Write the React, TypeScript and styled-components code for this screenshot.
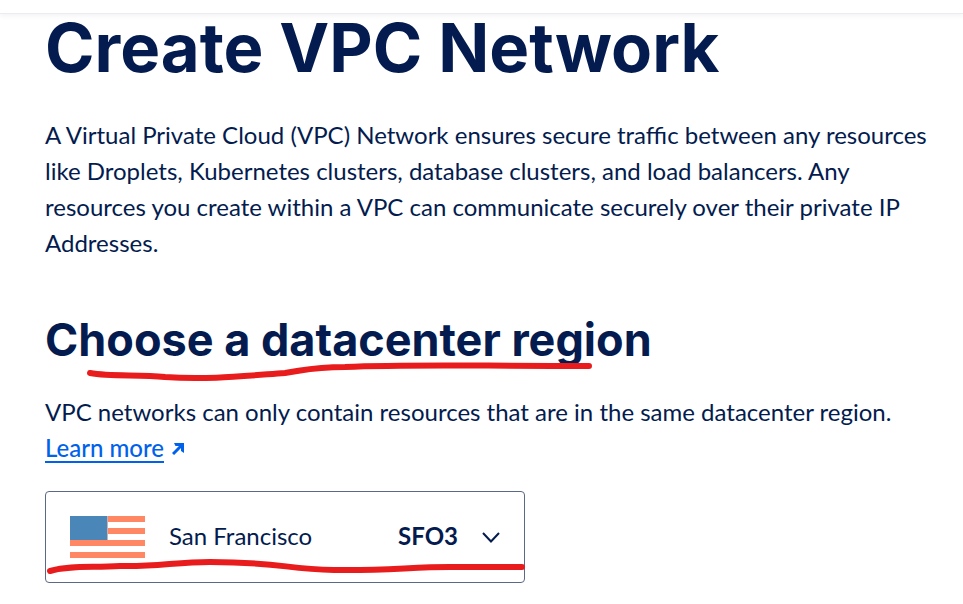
import React from "react";
import styled, { createGlobalStyle } from "styled-components";

const navy = "#031b4e";
const blue = "#0061eb";
const red = "#e81c1c";

const GlobalStyle = createGlobalStyle`
  *, *::before, *::after { box-sizing: border-box; }
  body {
    margin: 0;
    background: #fff;
    color: ${navy};
    font-family: Lato, "Open Sans", sans-serif;
    font-size: 24px;
    line-height: 36px;
  }
`;

const TopBar = styled.header`
  height: 14px;
  background: #fff;
  border-bottom: 1px solid #ececee;
  box-shadow: 0 2px 5px rgba(3, 27, 78, 0.05);
`;

const Content = styled.main`
  padding: 0 32px 20px 45px;
`;

const Title = styled.h1`
  margin: 0;
  font-family: Inter, Lato, sans-serif;
  font-size: 67px;
  line-height: 68px;
  font-weight: 700;
`;

const Text = styled.p`
  margin: 0;
`;

const Intro = styled(Text)`
  margin-top: 35px;
`;

const Section = styled.section`
  margin-top: 49px;
`;

const SectionTitle = styled.h2`
  position: relative;
  width: fit-content;
  margin: 0 0 24px;
  font-family: Inter, Lato, sans-serif;
  font-size: 45px;
  line-height: 60px;
  font-weight: 700;
`;

const LearnMore = styled.a`
  display: inline-flex;
  align-items: center;
  gap: 8px;
  color: ${blue};
  font-weight: 500;
  text-decoration: none;
`;

const LinkLabel = styled.span`
  line-height: 26px;
  border-bottom: 2px solid ${blue};
`;

const RegionPicker = styled.button`
  position: relative;
  display: flex;
  align-items: center;
  width: 100%;
  max-width: 480px;
  height: 92px;
  margin-top: 25px;
  padding: 0 24px;
  border: 1px solid #5b6987;
  border-radius: 4px;
  background: #fff;
  color: ${navy};
  font: inherit;
  text-align: left;
  cursor: pointer;
`;

const City = styled.span`
  flex: 1;
  margin-left: 24px;
  padding-bottom: 2px;
`;

const Code = styled.span`
  margin-right: 24px;
  padding-bottom: 2px;
  font-weight: 700;
`;

const Stroke = styled.svg<{ $left: number; $top: number }>`
  position: absolute;
  left: ${(p) => p.$left}px;
  top: ${(p) => p.$top}px;
  overflow: visible;
  pointer-events: none;
  fill: none;
  stroke: ${red};
  stroke-width: 6;
  stroke-linecap: round;
  stroke-linejoin: round;
`;

function Flag() {
  return (
    <svg width="75" height="42" viewBox="0 0 75 42" shapeRendering="crispEdges" aria-hidden="true">
      <path fill="#ff8764" d="M0 0h75v6H0zM0 12h75v6H0zM0 24h75v6H0zM0 36h75v6H0z" />
      <path fill="#c3b3b4" d="M37 0h1v24h-1z" />
      <path fill="#4a86b8" d="M0 0h37v24H0z" />
    </svg>
  );
}

function ExternalArrow() {
  return (
    <svg width="13" height="12" viewBox="0 0 13 12" aria-hidden="true">
      <path d="M1 11L10 2" stroke={blue} strokeWidth="3" fill="none" />
      <path d="M2 0H12V10L9 8V3H3.5Z" fill={blue} />
    </svg>
  );
}

function Chevron() {
  return (
    <svg width="18" height="11" viewBox="0 0 18 11" fill="none" aria-hidden="true">
      <path d="M1 1L9 9.500L17 1" stroke={navy} strokeWidth="2" />
    </svg>
  );
}

export default function App() {
  return (
    <>
      <GlobalStyle />
      <TopBar />
      <Content>
        <Title>Create VPC Network</Title>
        <Intro>
          A Virtual Private Cloud (VPC) Network ensures secure traffic between any resources like
          Droplets, Kubernetes clusters, database clusters, and load balancers. Any resources you
          create within a VPC can communicate securely over their private IP Addresses.
        </Intro>
        <Section>
          <SectionTitle id="region-title">
            Choose a datacenter region
            <Stroke $left={45} $top={56} width="500" height="14" viewBox="0 0 500 14" aria-hidden="true">
              <path d="M0 7C22 11 49 8 75 11C116 14 154 10 195 7C216 4 223 1 255 1C322 -2 376 0 499 0" />
            </Stroke>
          </SectionTitle>
          <Text>
            VPC networks can only contain resources that are in the same datacenter region.{" "}
            <LearnMore href="#learn-more">
              <LinkLabel>Learn more</LinkLabel>
              <ExternalArrow />
            </LearnMore>
          </Text>
          <RegionPicker type="button" aria-haspopup="listbox" aria-label="Datacenter region: San Francisco, SFO3">
            <Flag />
            <City>San Francisco</City>
            <Code>SFO3</Code>
            <Chevron />
            <Stroke $left={4} $top={70} width="472" height="10" viewBox="0 0 472 10" aria-hidden="true">
              <path d="M0 9C22 3 42 6 70 4C106 5 126 0 160 0C231 0 234 7 284 8C335 9 361 5 400 5H472" />
            </Stroke>
          </RegionPicker>
        </Section>
      </Content>
    </>
  );
}
